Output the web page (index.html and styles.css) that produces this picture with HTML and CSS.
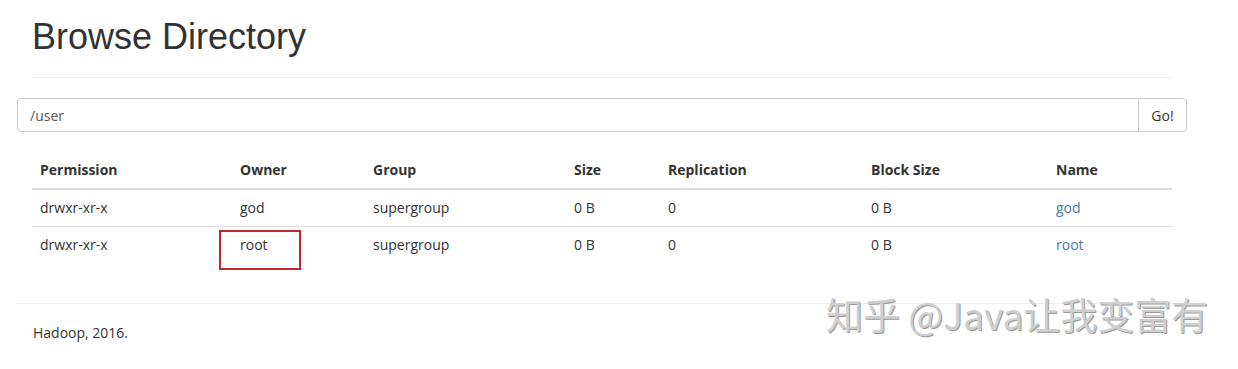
FILE: index.html
```html
<!DOCTYPE html>
<html lang="en">
<head>
    <meta charset="UTF-8">
    <title>Browse Directory</title>
    <link rel="stylesheet" href="styles.css">
</head>
<body>

    <div class="container">
        <div class="page-header">
            <h1>Browse Directory</h1>
        </div>

        <!-- Path input -->
        <div class="row">
            <div class="input-group">
                <input type="text" class="path-input" value="/user">
                <button class="go-btn">Go!</button>
            </div>
        </div>

        <!-- Listing -->
        <table class="listing">
            <thead>
                <tr>
                    <th class="c-perm">Permission</th>
                    <th class="c-owner">Owner</th>
                    <th class="c-group">Group</th>
                    <th class="c-size">Size</th>
                    <th class="c-repl">Replication</th>
                    <th class="c-block">Block Size</th>
                    <th>Name</th>
                </tr>
            </thead>
            <tbody>
                <tr>
                    <td>drwxr-xr-x</td>
                    <td>god</td>
                    <td>supergroup</td>
                    <td>0 B</td>
                    <td>0</td>
                    <td>0 B</td>
                    <td><a href="#">god</a></td>
                </tr>
                <tr>
                    <td>drwxr-xr-x</td>
                    <td class="marked"><span class="mark-box"></span>root</td>
                    <td>supergroup</td>
                    <td>0 B</td>
                    <td>0</td>
                    <td>0 B</td>
                    <td><a href="#">root</a></td>
                </tr>
            </tbody>
        </table>
    </div>

    <div class="footer">
        <p>Hadoop, 2016.</p>
        <span class="watermark">知乎 @Java让我变富有</span>
    </div>

</body>
</html>
```

FILE: styles.css
```css
body {
    margin: 0;
    font-family: "Open Sans", "Noto Sans", Arial, sans-serif;
    font-size: 14px;
    line-height: 20px;
    color: #333;
    background: #fff;
}

.container {
    width: 1140px;
    margin-left: 17px;
    padding: 0 15px;
}

/* Header */
.page-header {
    padding-bottom: 19px;
    margin: 16px 0 20px;
    border-bottom: 1px solid #eee;
}

.page-header h1 {
    margin: 0;
    font-family: "Liberation Sans", Arial, sans-serif;
    font-size: 36px;
    font-weight: 500;
    line-height: 42px;
}

/* Path input */
.row {
    margin: 0 -15px;
}

.input-group {
    display: flex;
    height: 34px;
}

.path-input {
    flex: 1;
    box-sizing: border-box;
    height: 34px;
    padding: 6px 12px;
    border: 1px solid #ccc;
    border-radius: 4px 0 0 4px;
    font-family: inherit;
    font-size: 14px;
    color: #555;
}

.go-btn {
    box-sizing: border-box;
    width: 49px;
    height: 34px;
    margin-left: -1px;
    border: 1px solid #ccc;
    border-radius: 0 4px 4px 0;
    background: #fff;
    font-family: inherit;
    font-size: 14px;
    color: #333;
}

/* Table */
.listing {
    width: 100%;
    margin-top: 20px;
    border-collapse: collapse;
}

.listing th,
.listing td {
    padding: 8px;
    text-align: left;
    vertical-align: top;
}

.listing th {
    font-weight: bold;
    border-bottom: 2px solid #ddd;
}

.listing td {
    border-top: 1px solid #ddd;
}

.listing tbody tr:first-child td {
    border-top: 0;
}

.c-perm { width: 184px; }
.c-owner { width: 117px; }
.c-group { width: 185px; }
.c-size { width: 78px; }
.c-repl { width: 187px; }
.c-block { width: 169px; }

.listing a {
    color: #4a78a9;
    text-decoration: none;
}

/* Red annotation box */
.marked {
    position: relative;
}

.mark-box {
    position: absolute;
    left: -13px;
    top: 3px;
    width: 78px;
    height: 36px;
    border: 2px solid #c4262e;
}

/* Footer */
.footer {
    position: relative;
    margin: 40px 0 0 17px;
    width: 1170px;
    border-top: 1px solid #eee;
    padding-top: 19px;
}

.footer p {
    margin: 0 0 0 16px;
}

.watermark {
    position: absolute;
    left: 809px;
    top: -13px;
    white-space: nowrap;
    font-family: "Noto Sans CJK SC", "Liberation Sans", sans-serif;
    font-size: 37px;
    line-height: 46px;
    color: #cfcfcf;
    text-shadow: 1px 1px 0 #9a9a9a;
}
```
